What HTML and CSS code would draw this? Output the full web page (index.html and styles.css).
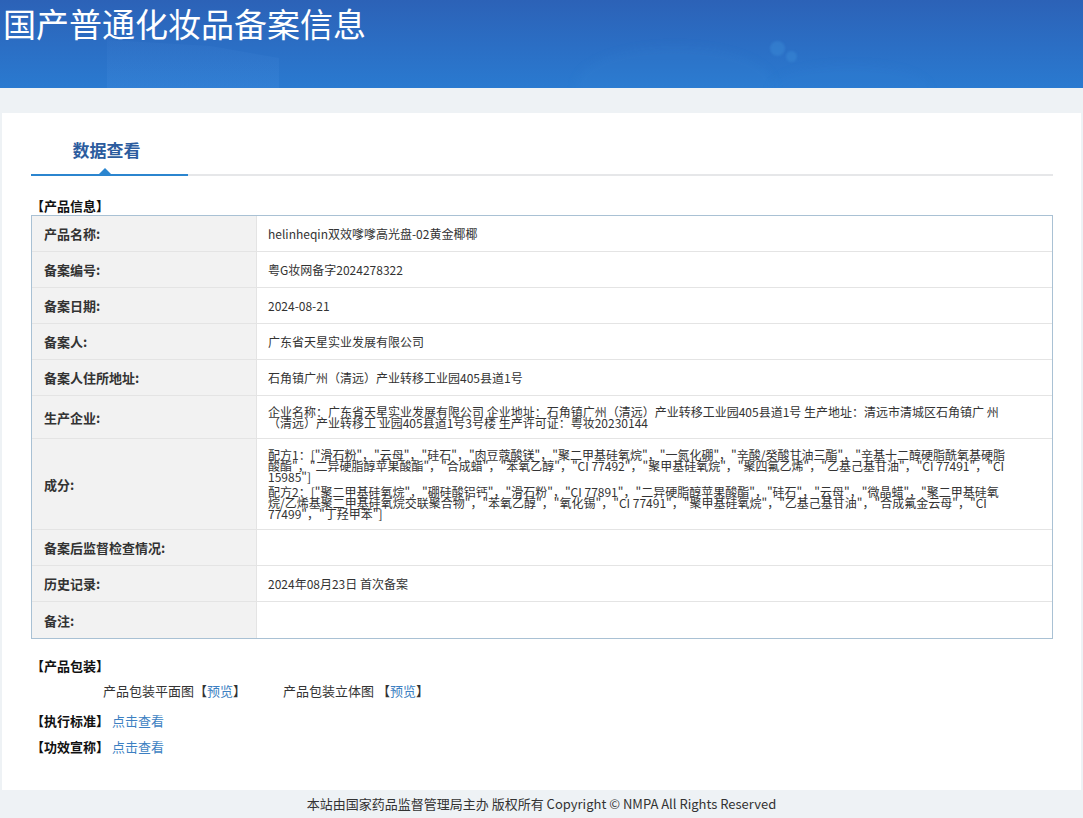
FILE: index.html
```html
<!DOCTYPE html>
<html lang="zh-CN">
<head>
<meta charset="utf-8">
<title>国产普通化妆品备案信息</title>
<link rel="stylesheet" href="styles.css">
</head>
<body>
<header class="banner">
  <span class="deco deco-a"></span>
  <span class="deco deco-b"></span>
  <span class="deco deco-c"></span>
  <span class="dot dot-1"></span>
  <span class="dot dot-2"></span>
  <h1 class="banner-title">国产普通化妆品备案信息</h1>
</header>

<main class="panel">
  <div class="tabs">
    <div class="tab tab-active">数据查看</div>
  </div>

  <div class="section-title">【产品信息】</div>
  <div class="info">
    <div class="k">产品名称:</div>
    <div class="v">helinheqin双效嗲嗲高光盘-02黄金椰椰</div>

    <div class="k">备案编号:</div>
    <div class="v">粤G妆网备字2024278322</div>

    <div class="k">备案日期:</div>
    <div class="v">2024-08-21</div>

    <div class="k">备案人:</div>
    <div class="v">广东省天星实业发展有限公司</div>

    <div class="k">备案人住所地址:</div>
    <div class="v">石角镇广州（清远）产业转移工业园405县道1号</div>

    <div class="k">生产企业:</div>
    <div class="v v-multi">企业名称：广东省天星实业发展有限公司 企业地址：石角镇广州（清远）产业转移工业园405县道1号 生产地址：清远市清城区石角镇广 州（清远）产业转移工 业园405县道1号3号楼 生产许可证：粤妆20230144</div>

    <div class="k">成分:</div>
    <div class="v v-multi">
      <div class="formula">配方1：["滑石粉"，"云母"，"硅石"，"肉豆蔻酸镁"，"聚二甲基硅氧烷"，"一氮化硼"，"辛酸/癸酸甘油三酯"，"辛基十二醇硬脂酰氧基硬脂酸酯"，"二异硬脂醇苹果酸酯"，"合成蜡"，"苯氧乙醇"，"CI 77492"，"聚甲基硅氧烷"，"聚四氟乙烯"，"乙基己基甘油"，"CI 77491"，"CI 15985"]</div>
      <div class="formula">配方2：["聚二甲基硅氧烷"，"硼硅酸铝钙"，"滑石粉"，"CI 77891"，"二异硬脂醇苹果酸酯"，"硅石"，"云母"，"微晶蜡"，"聚二甲基硅氧烷/乙烯基聚二甲基硅氧烷交联聚合物"，"苯氧乙醇"，"氧化锡"，"CI 77491"，"聚甲基硅氧烷"，"乙基己基甘油"，"合成氟金云母"，"CI 77499"，"丁羟甲苯"]</div>
    </div>

    <div class="k">备案后监督检查情况:</div>
    <div class="v"></div>

    <div class="k">历史记录:</div>
    <div class="v">2024年08月23日 首次备案</div>

    <div class="k k-last">备注:</div>
    <div class="v v-last"></div>
  </div>

  <div class="section-title section-pack">【产品包装】</div>
  <div class="pack">
    <span class="pack-item">产品包装平面图【<a class="link" href="#">预览</a>】</span>
    <span class="pack-item">产品包装立体图 【<a class="link" href="#">预览</a>】</span>
  </div>
  <div class="extra extra-first"><b class="extra-label">【执行标准】</b> <a class="link" href="#">点击查看</a></div>
  <div class="extra"><b class="extra-label">【功效宣称】</b> <a class="link" href="#">点击查看</a></div>
</main>

<footer class="footer">本站由国家药品监督管理局主办 版权所有 Copyright © NMPA All Rights Reserved</footer>
</body>
</html>
```

FILE: styles.css
```css
html, body {
  margin: 0;
  padding: 0;
}
body {
  background: #eef2f5;
  font-family: "Noto Sans CJK SC", "Noto Sans", sans-serif;
  color: #333;
}

/* banner */
.banner {
  position: relative;
  height: 88px;
  overflow: hidden;
  background: linear-gradient(180deg, #2c62b7 0%, #2b6fc5 55%, #2a7ad0 100%);
}
.banner-title {
  position: relative;
  margin: 0;
  padding: 4px 0 0 3px;
  font-size: 33px;
  line-height: 38px;
  font-weight: normal;
  color: #fff;
}
.deco {
  position: absolute;
  display: block;
}
.deco-a {
  left: 107px;
  top: 40px;
  width: 172px;
  height: 60px;
  background: linear-gradient(180deg, rgba(100,160,235,0.06), rgba(100,165,240,0.14));
  clip-path: polygon(0 0, 60% 10%, 100% 30%, 100% 100%, 0 100%);
}
.deco-b {
  left: 575px;
  top: 46px;
  width: 200px;
  height: 80px;
  border-radius: 50%;
  background: rgba(70, 160, 225, 0.07);
  filter: blur(4px);
}
.deco-c {
  left: 770px;
  top: 64px;
  width: 160px;
  height: 50px;
  border-radius: 50%;
  background: rgba(70, 160, 230, 0.06);
  filter: blur(4px);
}
.dot {
  position: absolute;
  display: block;
  border-radius: 50%;
  background: rgba(60, 140, 215, 0.45);
  filter: blur(1px);
}
.dot-1 { left: 770px; top: 41px; width: 15px; height: 15px; }
.dot-2 { left: 786px; top: 51px; width: 11px; height: 11px; }

/* panel */
.panel {
  margin: 25px 2px 0 2px;
  background: #fff;
  padding: 0 28px 30px 29px;
}

.tabs {
  padding-top: 25px;
  border-bottom: 2px solid #e6e7e9;
  display: flex;
}
.tab {
  position: relative;
  width: 157px;
  box-sizing: border-box;
  padding: 0 6px 12px 0;
  margin-bottom: -2px;
  text-align: center;
  font-size: 17px;
  line-height: 24px;
  font-weight: bold;
  color: #2c5c9e;
  border-bottom: 2px solid #2b85cf;
}
.tab-active::after {
  content: "";
  position: absolute;
  left: 68px;
  bottom: 0;
  width: 0;
  height: 0;
  border-left: 6px solid transparent;
  border-right: 6px solid transparent;
  border-bottom: 6px solid #2b85cf;
}

.section-title {
  margin-top: 21px;
  font-size: 13px;
  line-height: 18px;
  font-weight: bold;
  color: #111;
}

/* info grid */
.info {
  display: grid;
  grid-template-columns: 225px 1fr;
  border: 1px solid #a9c1d4;
}
.k, .v {
  box-sizing: border-box;
  min-height: 36px;
  border-bottom: 1px solid #e4e4e4;
  display: flex;
  align-items: center;
}
.k {
  background: #f2f2f2;
  border-right: 1px solid #e4e4e4;
  padding: 0 12px;
  font-size: 13px;
  font-weight: bold;
  color: #333;
}
.v {
  padding: 0 47px 0 11px;
  font-size: 12px;
  color: #333;
}
.v-multi {
  display: block;
  padding-top: 10px;
  padding-bottom: 10px;
  line-height: 11px;
}
.formula + .formula {
  margin-top: 4px;
}
.k-last, .v-last {
  border-bottom: none;
  min-height: 36px;
}

.section-pack {
  margin-top: 18px;
}

.pack {
  margin-top: 7px;
  padding-left: 72px;
  font-size: 13px;
  line-height: 18px;
  color: #333;
  display: flex;
}
.pack-item {
  width: 180px;
}

.link {
  color: #3c7fc2;
  text-decoration: none;
}

.extra {
  font-size: 13px;
  line-height: 26px;
  color: #111;
}
.extra-first {
  margin-top: 8px;
}
.extra-label {
  font-weight: bold;
}

.footer {
  height: 28px;
  line-height: 28px;
  text-align: center;
  font-size: 13px;
  color: #333;
}
```
